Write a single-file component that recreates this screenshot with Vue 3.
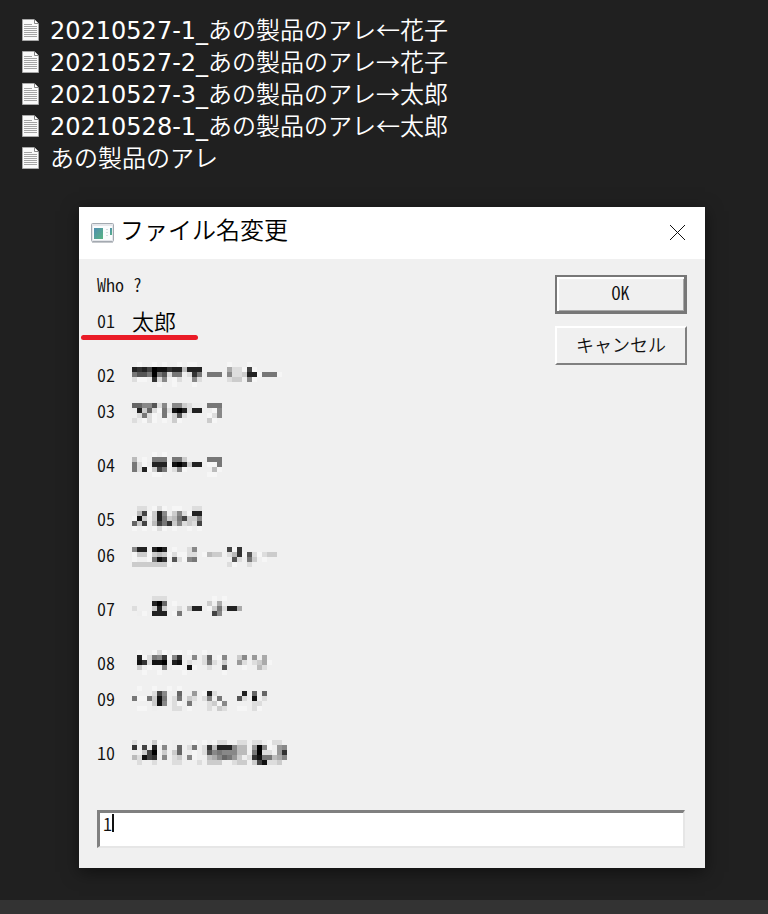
<template>
  <div class="desktop" lang="ja">
    <ul class="files">
      <li v-for="f in files" :key="f.stamp + f.name" class="file">
        <svg class="file-icon" width="17" height="22" viewBox="0 0 17 22" aria-hidden="true">
          <path d="M0.5 0.5H12L16.5 5V21.5H0.5Z" fill="#fafafa" stroke="#a8a8a8" />
          <path d="M12.5 0.5V4.5H16.5" fill="#fff" stroke="#858585" />
          <path d="M2 5.5H10M2 7.5H15M2 9.5H15M2 11.5H15M2 13.5H15M2 15.5H15M2 17.5H15" stroke="#a4a4a4" />
        </svg>
        <span><span class="stamp">{{ f.stamp }}</span>{{ f.name }}</span>
      </li>
    </ul>

    <section class="dialog" role="dialog" aria-labelledby="dialog-title">
      <header class="titlebar">
        <svg class="app-icon" width="23" height="20" viewBox="0 0 23 20" aria-hidden="true">
          <rect x="0.5" y="0.5" width="22" height="18" rx="1" fill="#e4e6ea" stroke="#a3a9b0" />
          <path d="M1 19.5H22" stroke="#c5c8cc" />
          <rect x="2" y="3" width="19" height="14" fill="#fafcfd" />
          <defs>
            <linearGradient id="pane" x1="0" y1="0" x2="1" y2="1">
              <stop offset="0" stop-color="#4f8db0" />
              <stop offset="1" stop-color="#58b583" />
            </linearGradient>
          </defs>
          <rect x="3" y="5" width="9" height="11" fill="url(#pane)" />
          <path d="M15 6.5H17M15 9.5H17M15 12.5H17" stroke="#d5dade" />
          <rect x="19" y="5" width="2" height="7" fill="url(#pane)" />
        </svg>
        <h1 id="dialog-title" class="title">ファイル名変更</h1>
        <button class="close" type="button" aria-label="閉じる">
          <svg width="17" height="17" viewBox="0 0 17 17" aria-hidden="true">
            <path d="M1 1L16 16M16 1L1 16" stroke="#111" />
          </svg>
        </button>
      </header>

      <form class="body" @submit.prevent>
        <div class="top">
          <div class="prompt">
            <label for="who">Who ?</label>
            <ol class="people">
              <li v-for="p in people" :key="p.no" class="person" :class="{ spaced: p.spaced, marked: p.name }">
                <span class="no">{{ p.no }}</span>
                <span v-if="p.name" class="name">{{ p.name }}</span>
                <svg v-else class="mosaic" width="160" height="25" viewBox="0 0 160 25" shape-rendering="crispEdges" aria-hidden="true">
                  <rect v-for="c in cells(p.mosaic)" :key="c.key" :x="c.x" :y="c.y" width="5" height="5" :fill="c.fill" />
                </svg>
              </li>
            </ol>
          </div>
          <div class="buttons">
            <button class="btn btn--default" type="submit">OK</button>
            <button class="btn" type="button">キャンセル</button>
          </div>
        </div>
        <div class="field">
          <input id="who" v-model="answer" class="input" type="text" autocomplete="off" />
          <span class="caret"></span>
        </div>
      </form>
    </section>

    <div class="bottom-bar"></div>
  </div>
</template>

<script setup>
import { ref } from 'vue'

const answer = ref('1')

const files = [
  { stamp: '20210527-1_', name: 'あの製品のアレ←花子' },
  { stamp: '20210527-2_', name: 'あの製品のアレ→花子' },
  { stamp: '20210527-3_', name: 'あの製品のアレ→太郎' },
  { stamp: '20210528-1_', name: 'あの製品のアレ←太郎' },
  { stamp: '', name: 'あの製品のアレ' },
]

// Mosaic rows: one hex grey level per 5px cell, "." is left empty
const people = [
  { no: '01', name: '太郎' },
  {
    no: '02',
    spaced: true,
    mosaic: [
      '.f..f.f..f.ff......f...f',
      '2324011322b222.....addf4f',
      '7557075d77ed37e777.8ddc22f777f',
      'dff.3d8.fd..8d.....dcc.8f',
      '.....f..f...f',
    ],
  },
  {
    no: '03',
    mosaic: [
      '',
      '66885d8e88cdee.777',
      'e2c6df7d102d22.ef8',
      '.d7df.7.c5d....fd8',
      'defdf.f.cf.....cf',
    ],
  },
  {
    no: '04',
    spaced: true,
    mosaic: [
      '....f.f',
      'b.f.777.77c....777',
      '7dfe222f102c22.ff7',
      '7d2fc47.d8f.....bf',
      '....ff.........ff',
    ],
  },
  {
    no: '05',
    spaced: true,
    mosaic: [
      '.dd.fdf.ff..dd',
      '.b4fc28ec8df22',
      'f1c.c27cb74cc8',
      '6c4eb473c8dcd4',
      'f.f.fdf.f..f.f',
    ],
  },
  {
    no: '06',
    mosaic: [
      '',
      '822.202.f..d8......4f3',
      'fccfcbcfdffdd.fbcc.db3f5dfdcc',
      'f..f713.5df87.......5d.7c.f',
      'cccccccf...........df..d',
    ],
  },
  {
    no: '07',
    spaced: true,
    mosaic: [
      '....ddd.........f.f',
      '....206.f......c.a',
      'd...c2c..d.b22.fc7d22a',
      '.ef.222.f7......48',
      '',
    ],
  },
  {
    no: '08',
    spaced: true,
    mosaic: [
      '.f..fdf.ff.f..f',
      '.2fd783f83..8.d6.f8..c8.9.a',
      'e13d110e21.de.d7d.c..9d.dcaf',
      '.cef..8.ff.1f..d..5...f..bd',
      '..f..f....f.......f',
    ],
  },
  {
    no: '09',
    mosaic: [
      '.f..f..f.f',
      '....d48..6..9.f2d.....2.6.6',
      '7ff7c17.d7.cd.d8.7...5d.1.d',
      '....c18.df.7e..dcf8.....dd',
      '.ff.e...dd.f...d.cd..ff.df',
    ],
  },
  {
    no: '10',
    spaced: true,
    mosaic: [
      'd.e.cf..e...f.f.fdd..dd.dd.fdd',
      '3.4e2.8.e6.d7.d3b2228bb.908f.98',
      'e.c40.c.c6.ef.d587888bb.70dd.93',
      'bd143.8.dc.8f..ba8679ced3177ba8',
      '.d..d...dd...d.ccc..dcc.c41ddc',
    ],
  },
]

function cells(rows) {
  const out = []
  rows.forEach((row, r) => {
    ;[...row].forEach((level, c) => {
      if (level === '.') return
      // "f" is a soft highlight, not pure white
      const fill = level === 'f' ? '#f6f6f6' : `#${level}${level}${level}`
      out.push({ key: `${r}-${c}`, x: c * 5, y: r * 5, fill })
    })
  })
  return out
}
</script>

<style>
body {
  margin: 0;
  background: #202020;
}
</style>

<style scoped>
.desktop {
  display: flex;
  flex-direction: column;
  min-height: 100vh;
  background: #202020;
  font-family: "Noto Sans CJK JP", sans-serif;
  font-weight: 350;
}

.files {
  margin: 0;
  padding: 14px 22px 0;
  list-style: none;
  color: #fff;
  font-size: 24px;
  line-height: 32px;
}

.file {
  display: flex;
  align-items: center;
  gap: 11px;
  height: 32px;
  white-space: nowrap;
}

.file-icon { flex: none; }

.stamp {
  font-family: "DejaVu Sans", sans-serif;
  font-weight: 400;
}

.dialog {
  margin: 33px 63px 32px 79px;
  background: #f0f0f0;
  box-shadow: 0 4px 16px rgba(0, 0, 0, 0.5);
  color: #111;
}

.titlebar {
  display: flex;
  align-items: center;
  height: 52px;
  padding: 0 12px;
  background: #fff;
}

.title {
  flex: 1;
  margin: 0 0 0 6px;
  padding-bottom: 8px;
  font-size: 24px;
  font-weight: 350;
  line-height: 32px;
  color: #000;
}

.close {
  display: flex;
  align-items: center;
  justify-content: center;
  width: 32px;
  height: 32px;
  padding: 0 0 2px;
  border: 0;
  background: none;
}

.body {
  padding: 16px 18px 20px;
  font-size: 18px;
  line-height: 18px;
  font-feature-settings: "hwid";
}

.top {
  display: flex;
  justify-content: space-between;
  align-items: flex-start;
}

.prompt label { display: block; }

.people {
  margin: 0;
  padding: 0;
  list-style: none;
}

.person {
  position: relative;
  display: flex;
  align-items: center;
  gap: 17px;
  height: 18px;
  margin-top: 18px;
}

.person.spaced { margin-top: 36px; }
.mosaic { flex: none; }

.name {
  font-size: 22px;
  line-height: 22px;
  color: #000;
}

/* red pen stroke under the chosen person */
.marked::after {
  content: "";
  position: absolute;
  left: -16px;
  top: 24px;
  width: 117px;
  height: 5px;
  border-radius: 3px;
  background: #ea1c27;
}

.buttons {
  display: flex;
  flex-direction: column;
  gap: 12px;
  width: 132px;
}

.btn {
  height: 39px;
  padding: 0 0 4px;
  border: 2px solid;
  border-color: #fff #808080 #808080 #fff;
  border-radius: 0;
  background: #f0f0f0;
  color: #111;
  font: inherit;
  font-feature-settings: inherit;
}

.btn--default {
  border-color: #777;
  border-width: 2px 3px 3px 2px;
  box-shadow: inset 2px 2px 0 #fff, inset -1px -1px 0 #a8a8a8;
}

.field {
  position: relative;
  margin: 49px 2px 0 0;
}

.input {
  display: block;
  box-sizing: border-box;
  width: 100%;
  height: 38px;
  padding: 0 3px 14px;
  border: solid;
  border-width: 3px 2px 2px 3px;
  border-color: #808080 #e6e6e6 #e6e6e6 #808080;
  border-radius: 0;
  outline: none;
  background: #fff;
  color: #111;
  font: inherit;
  font-feature-settings: inherit;
}

.caret {
  position: absolute;
  left: 15px;
  top: 4px;
  width: 2px;
  height: 18px;
  background: #111;
}

.field:focus-within .caret { display: none; }

.bottom-bar {
  height: 14px;
  margin-top: auto;
  background: #333;
}
</style>
